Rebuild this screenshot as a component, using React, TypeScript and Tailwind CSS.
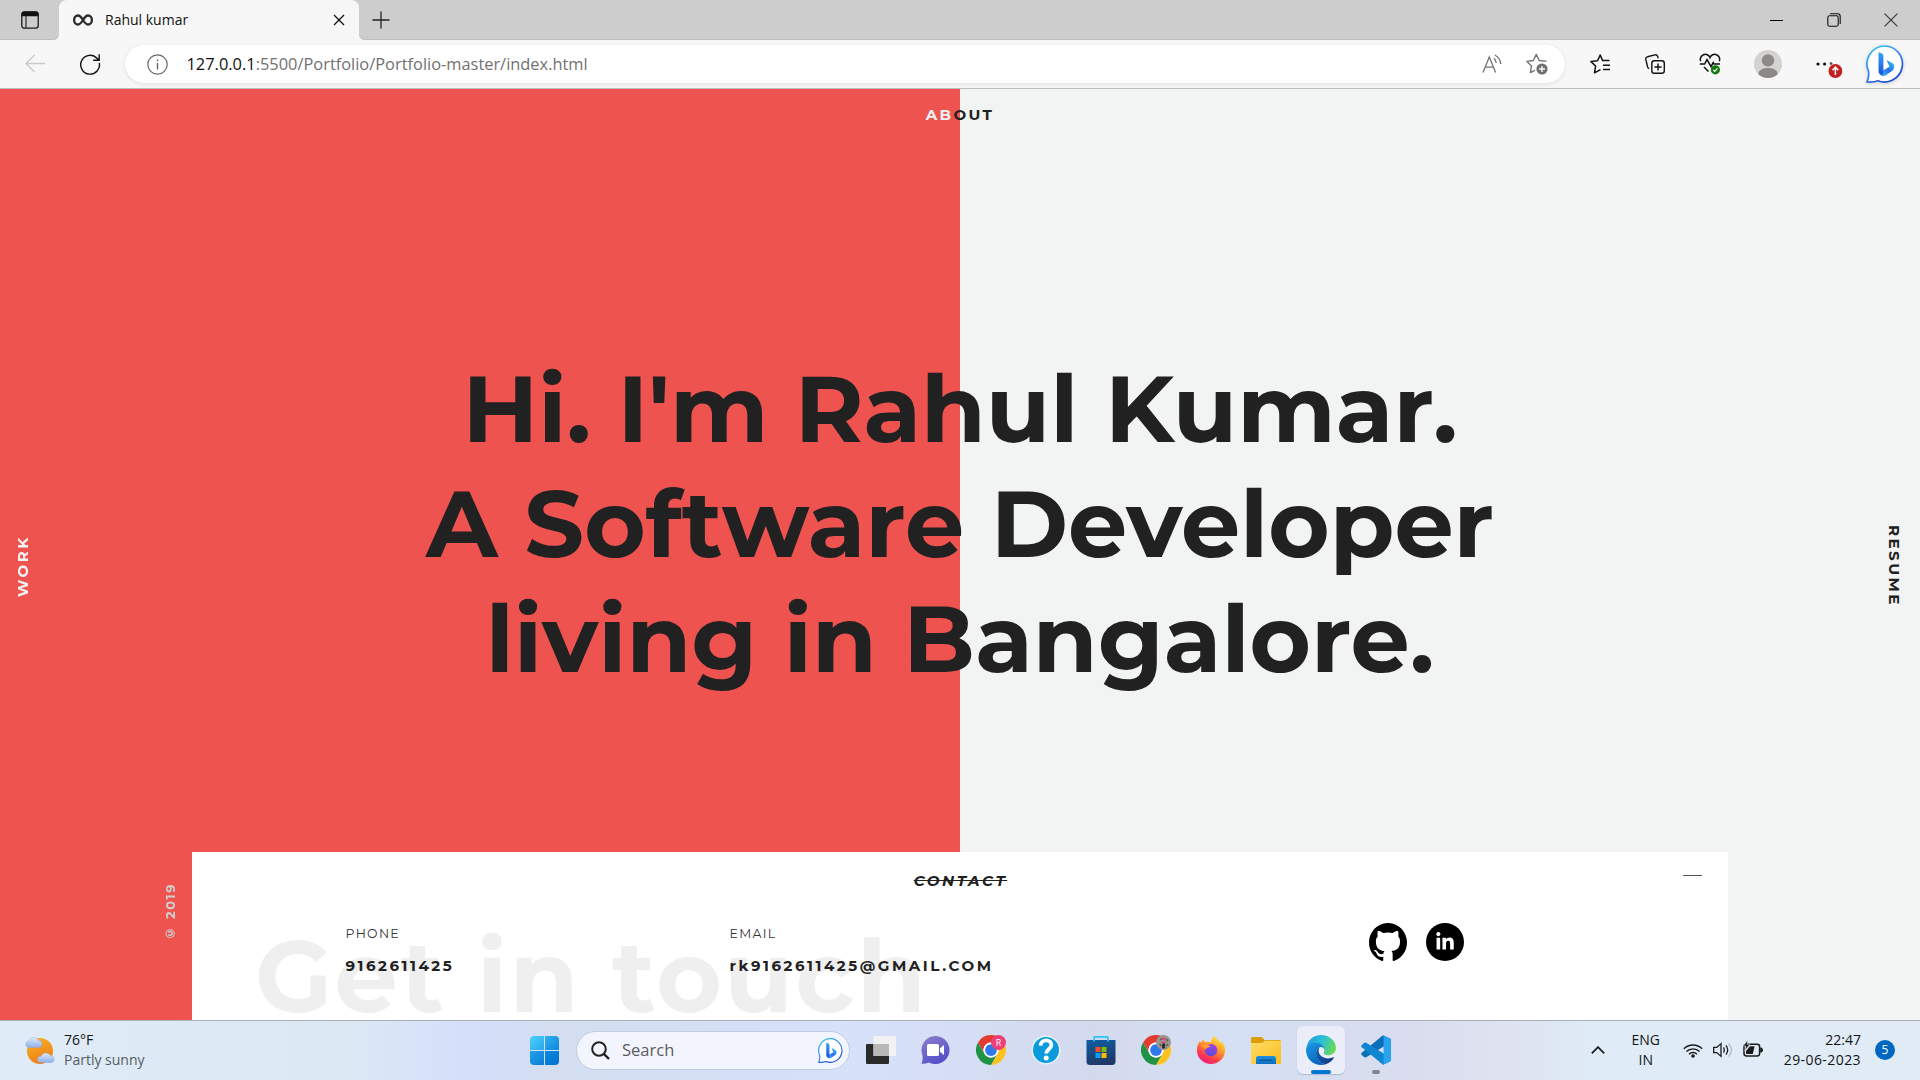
import React from 'react';
import { FaLinkedinIn } from 'react-icons/fa';

type IconProps = { className?: string };

function Slot({ className, children }: { className: string; children: React.ReactNode }) {
  return <div className={`flex shrink-0 items-center justify-center ${className}`}>{children}</div>;
}

function BingBubble({ className }: IconProps) {
  return (
    <svg viewBox="0 0 38 38" className={className} fill="none">
      <defs>
        <linearGradient id="bubble" x1="0" y1="0" x2="0.6" y2="1">
          <stop offset="0" stopColor="#2bd0ee" />
          <stop offset="0.5" stopColor="#3a86ee" />
          <stop offset="1" stopColor="#1b4fd6" />
        </linearGradient>
        <linearGradient id="bstem" x1="0" y1="0" x2="0" y2="1">
          <stop offset="0" stopColor="#37a6f5" />
          <stop offset="1" stopColor="#1c50dc" />
        </linearGradient>
        <linearGradient id="bbowl" x1="0" y1="1" x2="1" y2="0">
          <stop offset="0" stopColor="#3dc9f5" />
          <stop offset="0.5" stopColor="#2b6df0" />
          <stop offset="1" stopColor="#2fd8e4" />
        </linearGradient>
      </defs>
      <path
        d="M19 1A18 18 0 1 1 12 35.8C9 37 5 37.2 1 37C2.6 33.5 3 30 2.6 26.5A18 18 0 0 1 19 1Z"
        fill="#fff"
        stroke="url(#bubble)"
        strokeWidth="1.7"
      />
      <path d="M20.5 15L27 18.6Q29.6 21.6 26.8 25.4L18.6 31Q14.4 31.8 13.4 27.4L23.5 21.8Z" fill="url(#bbowl)" />
      <path d="M12.5 7L16 8.4Q17.4 9.2 17.4 11V26.5Q17.4 30 15.5 30Q12.5 29 12.5 26Z" fill="url(#bstem)" />
    </svg>
  );
}

function Chrome({ className }: IconProps) {
  return (
    <svg viewBox="0 0 48 48" className={className}>
      <circle cx="24" cy="24" r="24" fill="#fff" />
      <path d="M24 12H44.8A24 24 0 0 0 3.2 12L13.6 30A12 12 0 0 1 24 12Z" fill="#e33b2e" />
      <path d="M24 12H44.8A24 24 0 0 1 24 48L34.4 30A12 12 0 0 0 24 12Z" fill="#fcc31e" />
      <path d="M34.4 30L24 48A24 24 0 0 1 3.2 12L13.6 30A12 12 0 0 0 34.4 30Z" fill="#219245" />
      <circle cx="24" cy="24" r="12" fill="#fff" />
      <circle cx="24" cy="24" r="9.4" fill="#2f78ee" />
    </svg>
  );
}

function Edge({ className }: IconProps) {
  return (
    <svg viewBox="0 0 30 30" className={className}>
      <defs>
        <linearGradient id="edgeTop" x1="0" y1="0.3" x2="1" y2="0.6">
          <stop offset="0" stopColor="#1f9fe0" />
          <stop offset="0.5" stopColor="#2cc0d8" />
          <stop offset="1" stopColor="#6bdc4e" />
        </linearGradient>
        <linearGradient id="edgeLeft" x1="0" y1="0" x2="0.6" y2="1">
          <stop offset="0" stopColor="#1b9be2" />
          <stop offset="1" stopColor="#0a62c0" />
        </linearGradient>
        <linearGradient id="edgeBottom" x1="0" y1="0" x2="1" y2="0.6">
          <stop offset="0" stopColor="#0d5fb4" />
          <stop offset="1" stopColor="#123f86" />
        </linearGradient>
      </defs>
      <path d="M0.4 13C1.5 5 7.5 0 15 0C23.5 0 30 6 30 13C30 17.5 26.5 20.2 22.5 20.2C19.5 20.2 17.5 19.2 17.6 18.3C17.7 17.5 18.4 17.2 18.4 15.4C18.4 11.5 14.5 8.3 9.7 8.3C5 8.3 1.8 10.5 0.4 13Z" fill="url(#edgeTop)" />
      <path d="M0 15C0 10.5 4.3 7.8 9.5 7.8C14.5 7.8 18 10.8 18.3 14.5C17.5 12.5 16 11.6 14.2 12C11.5 13 9.8 16 10.3 19.5C11 25 15 28.6 19.6 29.2C17.8 29.8 16.5 30 15 30C6.5 30 0 23.3 0 15Z" fill="url(#edgeLeft)" />
      <path d="M13.8 12.2C11 13 9.8 16 10.1 19.3C10.7 25 15.5 29.2 19.8 29.2C23.8 27.8 26.5 25.3 27.9 22.7C28 22.3 27.7 22.1 27.2 22.3C25.8 23 24 23.5 22.2 23.5C17 23.5 12.6 20 12.6 15.8C12.6 14.3 13.1 13 13.8 12.2Z" fill="url(#edgeBottom)" />
    </svg>
  );
}

function VsCode({ className }: IconProps) {
  return (
    <svg viewBox="0 0 30 30" className={className}>
      <path d="M22 0.2L29 3.4Q30 4 30 5.2V7L5.2 22.2Q4 22.8 3 22L0.6 19.8Q-0.3 18.8 0.8 17.8Z" fill="#0a6fb8" />
      <path d="M22 29.8L29 26.6Q30 26 30 24.8V23L5.2 7.8Q4 7.2 3 8L0.6 10.2Q-0.3 11.2 0.8 12.2Z" fill="#0f86d2" />
      <path d="M22 0.2L29 3.4Q30 4 30 5.2V24.8Q30 26 29 26.6L22 29.8Q22.6 29 22.6 27.5V2.5Q22.6 1 22 0.2Z" fill="#27a3f0" />
    </svg>
  );
}

function Firefox({ className }: IconProps) {
  return (
    <svg viewBox="0 0 28 28" className={className}>
      <defs>
        <linearGradient id="fox" x1="0.8" y1="0" x2="0.25" y2="1">
          <stop offset="0" stopColor="#fff044" />
          <stop offset="0.4" stopColor="#ff9a2a" />
          <stop offset="0.75" stopColor="#ff3a4a" />
          <stop offset="1" stopColor="#e8178a" />
        </linearGradient>
        <linearGradient id="globe" x1="0.6" y1="0" x2="0.4" y2="1">
          <stop offset="0" stopColor="#a23fe8" />
          <stop offset="1" stopColor="#5a4fd8" />
        </linearGradient>
      </defs>
      <path d="M18 0C19 3 22 4 24 7C24.6 6.4 24.8 5.6 24.8 5C27 8 28 11 28 14.4A14 13.6 0 0 1 0 14.4C0 10.5 1 7 3.2 4.8C3.4 6 3.6 6.6 4.2 7C4.6 5.4 5.4 4.2 6.6 3.4C6.6 4.8 7.4 5.6 8.6 6.2C10.5 5.6 12.5 5.8 14 6.4C14 3.5 15.6 1.2 18 0Z" fill="url(#fox)" />
      <circle cx="14" cy="14.2" r="6.2" fill="url(#globe)" />
      <path d="M3.5 9.2C6 8 10 8.2 13.5 10.2C12 12 9 11.5 8.5 13.5C7 12 5 10.5 3.5 9.2Z" fill="#ff9d2c" />
    </svg>
  );
}

function Folder({ className }: IconProps) {
  return (
    <svg viewBox="0 0 30 27" className={className}>
      <defs>
        <linearGradient id="folder" x1="0" y1="0" x2="1" y2="1">
          <stop offset="0" stopColor="#ffdc6a" />
          <stop offset="1" stopColor="#fbbd1c" />
        </linearGradient>
        <linearGradient id="tray" x1="0" y1="0" x2="0" y2="1">
          <stop offset="0" stopColor="#1d8fe0" />
          <stop offset="1" stopColor="#0e6fc4" />
        </linearGradient>
      </defs>
      <path d="M0 1.5Q0 0 1.5 0H10Q11 0 11.8 1L13.5 3H29Q30 3 30 4V12H0Z" fill="#dd9d08" />
      <path d="M0 6H10Q11.5 6 12.5 5L14 3.8H30V25.5Q30 27 28.5 27H1.5Q0 27 0 25.5Z" fill="url(#folder)" />
      <path d="M5 27V21.5Q5 19 7.5 19H22.5Q25 19 25 21.5V27Z" fill="url(#tray)" />
      <path d="M8.5 23.2H21.5" stroke="#0b4f94" strokeWidth="1.2" />
    </svg>
  );
}

function Store({ className }: IconProps) {
  return (
    <svg viewBox="0 0 30 29" className={className}>
      <defs>
        <linearGradient id="bag" x1="0" y1="0" x2="0.3" y2="1">
          <stop offset="0" stopColor="#0f5ea6" />
          <stop offset="1" stopColor="#1f3a68" />
        </linearGradient>
      </defs>
      <path d="M8 6V2Q8 0.8 9.2 0.8H20.8Q22 0.8 22 2V6" fill="none" stroke="#2cc3f2" strokeWidth="1.7" />
      <path d="M0.5 4H29.5V25.5Q29.5 29 26 29H4Q0.5 29 0.5 25.5Z" fill="url(#bag)" />
      <path d="M8 4V5.6M22 4V5.6" stroke="#2cc3f2" strokeWidth="1.7" />
      <path d="M9.5 11H14.5V16H9.5Z" fill="#f25022" />
      <path d="M15.5 11H20.5V16H15.5Z" fill="#7fba00" />
      <path d="M9.5 17H14.5V22H9.5Z" fill="#00a4ef" />
      <path d="M15.5 17H20.5V22H15.5Z" fill="#ffb900" />
    </svg>
  );
}

function Weather({ className }: IconProps) {
  return (
    <svg viewBox="0 0 30 28" className={className}>
      <defs>
        <linearGradient id="sun" x1="0" y1="0" x2="0.4" y2="1">
          <stop offset="0" stopColor="#f6b62c" />
          <stop offset="1" stopColor="#f07f13" />
        </linearGradient>
        <linearGradient id="cloud" x1="0" y1="0" x2="0" y2="1">
          <stop offset="0" stopColor="#dfe9fb" />
          <stop offset="1" stopColor="#8fb0ea" />
        </linearGradient>
      </defs>
      <circle cx="15" cy="15" r="13" fill="url(#sun)" />
      <path d="M3.5 11.5A3.3 3.3 0 0 1 3.5 5A5.6 5.6 0 0 1 13.5 4.2A3.7 3.7 0 0 1 14 11.5Z" fill="url(#cloud)" stroke="#8fabdf" strokeWidth="0.4" />
      <path d="M15.5 26.5A3.1 3.1 0 0 1 16 20.3A5.3 5.3 0 0 1 25.5 19.6A3.5 3.5 0 0 1 26.5 26.5Z" fill="url(#cloud)" stroke="#8fabdf" strokeWidth="0.4" />
    </svg>
  );
}

function TabStrip() {
  return (
    <div className="flex h-10 bg-[#f7f7f7]">
      <Slot className="w-[59px] rounded-br-md bg-[#cdcdcd] pl-px shadow-[inset_0_-1px_0_#bdbdbd]">
        <svg viewBox="0 0 18 18" className="size-[18px]" fill="none">
          <rect x="0.8" y="0.8" width="16.4" height="16.4" rx="2.6" stroke="#1a1a1a" strokeWidth="1.3" />
          <path d="M0.6 5.2V3Q0.6 0.6 3 0.6H15Q17.4 0.6 17.4 3V5.2Z" fill="#111" />
          <path d="M5 5V17" stroke="#1a1a1a" strokeWidth="1.1" />
        </svg>
      </Slot>
      <div className="w-[300px] bg-[linear-gradient(#cdcdcd_50%,#f7f7f7_50%)]">
        <div className="flex h-10 items-center rounded-t-lg bg-[#f7f7f7] pl-3.5 pr-3.5">
          <svg viewBox="0 0 20 12" className="h-3 w-5" fill="none" stroke="#2a2a2a" strokeWidth="2.3">
            <path d="M10 6C8.4 3.4 7.2 1.5 5 1.5A3.9 4.5 0 0 0 5 10.5C7.2 10.5 8.4 8.6 10 6C11.6 3.4 12.8 1.5 15 1.5A3.9 4.5 0 0 1 15 10.5C12.8 10.5 11.6 8.6 10 6Z" />
          </svg>
          <span className="ml-3 flex-1 text-sm leading-5 text-[#111]">Rahul kumar</span>
          <svg viewBox="0 0 12 12" className="size-3" fill="none" stroke="#111" strokeWidth="1.3">
            <path d="M1 1L11 11M11 1L1 11" />
          </svg>
        </div>
      </div>
      <div className="flex flex-1 items-center rounded-bl-md bg-[#cdcdcd] shadow-[inset_0_-1px_0_#bdbdbd]">
        <svg viewBox="0 0 18 18" className="ml-[13px] size-[18px]" fill="none" stroke="#222" strokeWidth="1.3">
          <path d="M9 0.5V17.5M0.5 9H17.5" />
        </svg>
        <div className="flex-1" />
        <Slot className="w-[58px]">
          <div className="h-px w-[13px] bg-black" />
        </Slot>
        <Slot className="w-[57px]">
          <svg viewBox="0 0 14 14" className="size-3.5" fill="none" stroke="#111" strokeWidth="1.1">
            <rect x="0.8" y="2.8" width="10.4" height="10.4" rx="1.6" />
            <path d="M3 0.8H10.6Q13.2 0.8 13.2 3.4V11" />
          </svg>
        </Slot>
        <Slot className="w-[58px]">
          <svg viewBox="0 0 14 14" className="size-3.5" fill="none" stroke="#333" strokeWidth="1.1">
            <path d="M0.6 0.6L13.4 13.4M13.4 0.6L0.6 13.4" />
          </svg>
        </Slot>
      </div>
    </div>
  );
}

function Toolbar() {
  return (
    <div className="flex h-[49px] items-center border-b border-[#bcbcbc] bg-[#f7f7f7]">
      <Slot className="w-[69px]">
        <svg viewBox="0 0 20 20" className="size-5" fill="none" stroke="#c9c9c9" strokeWidth="1.3">
          <path d="M20 9.5H1M9.5 1L1 9.5L9.5 18" />
        </svg>
      </Slot>
      <Slot className="w-[42px]">
        <svg viewBox="0 0 22 22" className="size-[22px]" fill="none" stroke="#111" strokeWidth="1.4">
          <path d="M20.3 9.8A9.4 9.4 0 1 1 17.2 4.6L20 7M20.2 1.2V7.2H14.2" />
        </svg>
      </Slot>
      <div className="ml-[14px] flex h-[38px] w-[1440px] items-center rounded-full bg-white pl-[22px] shadow-[0_1px_4px_rgba(0,0,0,0.1)]">
        <svg viewBox="0 0 21 21" className="size-[21px]" fill="none" stroke="#666" strokeWidth="1.2">
          <circle cx="10.5" cy="10.5" r="9.7" />
          <path d="M10.5 9V15.5M10.5 5.6V7.2" strokeWidth="1.4" />
        </svg>
        <span className="ml-[18.5px] flex-1 text-[16.4px] leading-6 text-[#717171]">
          <span className="text-[#111]">127.0.0.1</span>:5500/Portfolio/Portfolio-master/index.html
        </span>
        <Slot className="w-[45px]">
          <svg viewBox="0 0 20 20" className="size-5" fill="none" stroke="#757575" strokeWidth="1.3">
            <path d="M1 18.5L7.3 3L13.6 18.5M3.2 13.2H11.4M12 4.2Q14 6 14.2 9M12.8 1Q18.2 3.8 18.8 10" />
          </svg>
        </Slot>
        <Slot className="mr-[6px] w-[45px]">
          <svg viewBox="0 0 22 22" className="size-[22px]" fill="none" stroke="#757575" strokeWidth="1.4" strokeLinejoin="round">
            <path d="M20.5 8.4L13.2 7.5L10.3 1.4L7.3 7.5L0.9 8.4L5.5 12.9L4.4 19.6L9 17.4" />
            <circle cx="16" cy="16" r="5.6" fill="#707070" stroke="none" />
            <path d="M16 13V19M13 16H19" stroke="#fff" />
          </svg>
        </Slot>
      </div>
      <Slot className="ml-[7px] w-[55px]">
        <svg viewBox="0 0 20 20" className="size-5" fill="none" stroke="#111" strokeWidth="1.5" strokeLinejoin="round">
          <path d="M19.5 6.6H12.6L10.2 1L7.5 6.8L1 7.6L5.6 12L4.5 18.8L10.5 15.6M13 11.2H20M13 15.6H20" />
        </svg>
      </Slot>
      <Slot className="w-[55px]">
        <svg viewBox="0 0 20 20" className="size-5" fill="none" stroke="#111" strokeWidth="1.4">
          <rect x="6.8" y="6.8" width="12.5" height="12.5" rx="2.6" />
          <path d="M13 9.6V16.6M9.5 13H16.6M4.2 14.6Q3 14.2 2.6 13L0.8 5.4Q0.4 3.4 2.4 2.8L10 0.9Q12 0.5 12.6 2.4L13.2 4.4" />
        </svg>
      </Slot>
      <Slot className="w-[55px]">
        <svg viewBox="0 0 22 22" className="size-[22px]" fill="none" stroke="#111" strokeWidth="1.5">
          <path d="M1.6 8.2A5 5 0 0 1 11 4.6A5 5 0 0 1 20.4 8.2M5 14L9.5 18.5M0.8 11H5.6L8 6.6L12 13.6L14.2 9.6L15 11H21" />
          <circle cx="16.4" cy="16.8" r="4.6" fill="#107c10" stroke="none" />
          <path d="M14.4 17L15.8 18.4L18.4 15.4" stroke="#fff" strokeWidth="1.2" />
        </svg>
      </Slot>
      <Slot className="w-[61px]">
        <svg viewBox="0 0 28 28" className="size-7">
          <circle cx="14" cy="14" r="14" fill="#d5d2cf" />
          <circle cx="14" cy="10.4" r="6.2" fill="#8d8986" />
          <path d="M4.2 24C5 19.8 9 18 14 18S23 19.8 23.8 24A14 14 0 0 1 4.2 24Z" fill="#8d8986" />
        </svg>
      </Slot>
      <Slot className="w-[58px]">
        <svg viewBox="0 0 28 28" className="ml-1 size-7">
          <circle cx="3" cy="14" r="1.6" fill="#111" />
          <circle cx="9.6" cy="14" r="1.6" fill="#111" />
          <circle cx="16" cy="13.6" r="1.4" fill="#555" />
          <circle cx="20.4" cy="21" r="6.9" fill="#c4201f" />
          <path d="M20.4 25V17.5M17.5 20.2L20.4 17.2L23.3 20.2" fill="none" stroke="#fff" strokeWidth="1.5" />
        </svg>
      </Slot>
      <Slot className="w-[57px]">
        <BingBubble className="size-[38px] drop-shadow-sm" />
      </Slot>
    </div>
  );
}

function ContactPanel() {
  return (
    <div className="flex h-[168px]">
      <div className="flex w-48 justify-end pr-3.5 pt-[30px]">
        <span className="h-[60px] rotate-180 whitespace-nowrap text-[13px] font-bold leading-[15px] tracking-[1.6px] text-[#cfcfcf] [writing-mode:vertical-rl]">
          © 2019
        </span>
      </div>
      <section className="relative w-[1536px] overflow-hidden bg-white">
        <div aria-hidden="true" className="absolute left-[63px] top-[63px] whitespace-nowrap text-[100px] font-bold leading-[122px] tracking-[2.5px] text-[#efefef]">
          Get in touch
        </div>
        <div className="absolute right-[26px] top-[23px] h-px w-[19px] bg-[#555]" />
        <h2 className="relative pl-px pt-[19px] text-center text-[15px] font-bold italic leading-[19px] tracking-[2.57px] line-through">
          CONTACT
        </h2>
        <div className="relative flex items-start pl-[153.5px] pt-[33px]">
          <div className="w-[384px]">
            <p className="pt-[3px] text-[12.5px] leading-[15px] tracking-[1.3px] text-[#333]">PHONE</p>
            <p className="mt-[15px] text-[15px] font-bold leading-[19px] tracking-[2.55px]">9162611425</p>
          </div>
          <div className="w-[639.5px]">
            <p className="pt-[3px] text-[12.5px] leading-[15px] tracking-[1.3px] text-[#333]">EMAIL</p>
            <p className="mt-[15px] text-[15px] font-bold leading-[19px] tracking-[2.55px]">rk9162611425@GMAIL.COM</p>
          </div>
          <div className="flex gap-[19px]">
            <svg viewBox="0 0.3 24 23.4" className="size-[38px]" preserveAspectRatio="none">
              <path d="M12 .297c-6.63 0-12 5.373-12 12 0 5.303 3.438 9.8 8.205 11.385.6.113.82-.258.82-.577 0-.285-.01-1.04-.015-2.04-3.338.724-4.042-1.61-4.042-1.61C4.422 18.07 3.633 17.7 3.633 17.7c-1.087-.744.084-.729.084-.729 1.205.084 1.838 1.236 1.838 1.236 1.07 1.835 2.809 1.305 3.495.998.108-.776.417-1.305.76-1.605-2.665-.3-5.466-1.332-5.466-5.93 0-1.31.465-2.38 1.235-3.22-.135-.303-.54-1.523.105-3.176 0 0 1.005-.322 3.3 1.23.96-.267 1.98-.399 3-.405 1.02.006 2.04.138 3 .405 2.28-1.552 3.285-1.23 3.285-1.23.645 1.653.24 2.873.12 3.176.765.84 1.23 1.91 1.23 3.22 0 4.61-2.805 5.625-5.475 5.92.42.36.81 1.096.81 2.22 0 1.606-.015 2.896-.015 3.286 0 .315.21.69.825.57C20.565 22.092 24 17.592 24 12.297c0-6.627-5.373-12-12-12" />
            </svg>
            <div className="flex size-[38px] items-center justify-center rounded-full bg-black">
              <FaLinkedinIn className="size-5 text-white" />
            </div>
          </div>
        </div>
      </section>
      <div className="flex-1" />
    </div>
  );
}

function Portfolio() {
  return (
    <main className="flex h-[931px] flex-col bg-[linear-gradient(90deg,#ef5350_50%,#f1f4f3_50%)] font-['Montserrat','Inter',sans-serif] text-[#212121]">
      <div className="flex h-[763px] justify-between">
        <nav className="flex w-[60px] pl-[13px] pt-[446px]">
          <span className="h-[62px] rotate-180 whitespace-nowrap text-[15px] font-bold leading-[19px] tracking-[2.5px] text-[#f1f3f3] [writing-mode:vertical-rl]">
            WORK
          </span>
        </nav>
        <div className="flex flex-col items-center pt-4 text-center">
          <p className="text-[15px] font-bold leading-[19px] tracking-[2.4px]">
            <span className="text-[#f1f3f3]">AB</span>OUT
          </p>
          <h1 className="mt-[227px] text-[93.75px] font-bold leading-[115px]">
            Hi. I'm Rahul Kumar.
            <br />A Software Developer
            <br />
            living in Bangalore.
          </h1>
        </div>
        <nav className="flex w-[60px] justify-end pr-4 pt-[436px]">
          <span className="h-[83px] whitespace-nowrap text-[15px] font-bold leading-[19px] tracking-[2.5px] [writing-mode:vertical-rl]">
            RESUME
          </span>
        </nav>
      </div>
      <ContactPanel />
    </main>
  );
}

function Taskbar() {
  return (
    <footer className="flex h-[60px] items-center border-t border-[#a9b0bb] bg-[linear-gradient(90deg,#dfebf6_0%,#dce9f5_18%,#d3defa_25%,#d4def0_29%,#d6e1fa_44%,#d4daee_57%,#d5e0f4_64%,#d8dcee_73%,#dfe2f0_78%,#dfebf7_83%,#e0ebf5_100%)] pb-px text-[#151515]">
      <div className="flex w-[517px] items-center pl-[25px]">
        <Weather className="h-7 w-[30px]" />
        <div className="ml-[9px] text-sm leading-5">
          <p>76°F</p>
          <p className="text-[#555b62]">Partly sunny</p>
        </div>
      </div>
      <Slot className="w-[55px]">
        <div className="grid size-[29px] grid-cols-2 gap-px overflow-hidden rounded-sm">
          <div className="bg-gradient-to-br from-[#4cd0fb] to-[#28a8ea]" />
          <div className="bg-gradient-to-br from-[#2fb0ee] to-[#0d86dc]" />
          <div className="bg-gradient-to-br from-[#27a3e8] to-[#0a7cd6]" />
          <div className="bg-gradient-to-br from-[#0e8ade] to-[#0070cf]" />
        </div>
      </Slot>
      <div className="ml-1 flex h-[39px] w-[274px] items-center rounded-full border border-[#c3cbe0] bg-[#f2f5fd] pl-[14px] pr-1.5">
        <svg viewBox="0 0 19 19" className="size-[19px]" fill="none" stroke="#222" strokeWidth="2">
          <circle cx="8" cy="8" r="6.8" />
          <path d="M12.8 12.8L18 18" strokeWidth="2.4" />
        </svg>
        <span className="ml-3 flex-1 text-[16.5px] leading-6 text-[#5b5b60]">Search</span>
        <BingBubble className="size-[25px]" />
      </div>
      <Slot className="ml-[3px] w-[55px]">
        <svg viewBox="0 0 30 28" className="h-7 w-[30px]">
          <rect x="0" y="8" width="23" height="20" rx="1" fill="#2a2a2a" />
          <rect x="7.5" y="0" width="22.5" height="20" rx="1" fill="#f2f2f2" />
          <rect x="7.5" y="8" width="15.5" height="12" fill="#b9b9b9" />
        </svg>
      </Slot>
      <Slot className="w-[55px]">
        <svg viewBox="0 0 29 28" className="h-7 w-[29px]">
          <defs>
            <linearGradient id="chat" x1="0" y1="0" x2="0.5" y2="1">
              <stop offset="0" stopColor="#8f7fce" />
              <stop offset="1" stopColor="#5450c8" />
            </linearGradient>
          </defs>
          <path d="M14.7 0A14 14 0 1 1 8 26.4Q4 28 0.4 27.8Q2 25 1.6 19.5A14 14 0 0 1 14.7 0Z" fill="url(#chat)" />
          <rect x="6" y="8" width="12" height="12" rx="1.6" fill="#fff" />
          <path d="M19 12.2L23 9V19L19 15.8Z" fill="#fff" />
        </svg>
      </Slot>
      <Slot className="relative w-[56px]">
        <Chrome className="size-[30px]" />
        <span className="absolute right-[13px] top-0 flex size-[15px] items-center justify-center rounded-full bg-[#ee3f78] text-[9px] leading-none text-white">
          R
        </span>
      </Slot>
      <Slot className="w-[54px]">
        <svg viewBox="0 0 30 30" className="size-[30px]" fill="none">
          <circle cx="15" cy="15" r="13.8" fill="#0a9bdc" stroke="#e6f2fa" strokeWidth="1.6" />
          <path d="M9.6 10.6C9.8 3.6 20.6 3.8 20.4 10.2C20.2 14 15.2 14.2 15.2 18.6" stroke="#fff" strokeWidth="3.8" />
          <circle cx="15.2" cy="23" r="2.5" fill="#fff" />
        </svg>
      </Slot>
      <Slot className="w-[55px]">
        <Store className="h-[29px] w-[30px]" />
      </Slot>
      <Slot className="relative w-[56px]">
        <Chrome className="size-[30px]" />
        <svg viewBox="0 0 15 15" className="absolute right-[13px] top-0 size-[15px]">
          <circle cx="7.5" cy="7.5" r="7.5" fill="#9a9590" />
          <path d="M4 5L6 3.5M10 4L12 6M3.5 9L5.5 11M10 11L12 9" stroke="#5c5c52" strokeWidth="1.4" />
          <path d="M6 2.5H9V5H6ZM5.5 6.5H9.8V8H5.5Z" fill="#e0457c" />
          <path d="M6.2 8.5H9V13.5H6.2Z" fill="#2c2630" />
        </svg>
      </Slot>
      <Slot className="w-[54px]">
        <Firefox className="size-7" />
      </Slot>
      <Slot className="w-[56px]">
        <Folder className="h-[27px] w-[30px]" />
      </Slot>
      <div className="ml-[3px] flex h-12 w-12 flex-col items-center rounded-md bg-[#ebeef8] pt-[9px] shadow-[0_1px_1px_rgba(90,100,140,0.3)]">
        <Edge className="size-[30px]" />
        <div className="mt-[5px] h-1 w-5 rounded-full bg-[#0078d4]" />
      </div>
      <div className="ml-[7px] flex h-12 w-12 flex-col items-center pt-[9px]">
        <VsCode className="size-[30px]" />
        <div className="mt-[5px] h-1 w-2 rounded-full bg-[#82858c]" />
      </div>
      <div className="flex flex-1 items-center justify-end pr-[25px] text-sm leading-5">
        <svg viewBox="0 0 14 8" className="h-2 w-3.5" fill="none" stroke="#1a1a1a" strokeWidth="1.7">
          <path d="M0.8 7.3L7 1.1L13.2 7.3" />
        </svg>
        <p className="ml-[26px] w-[30px] text-center">
          ENG
          <br />
          IN
        </p>
        <svg viewBox="0 0 20 15" className="ml-[22px] h-[15px] w-5" fill="none" stroke="#1a1a1a" strokeWidth="1.4">
          <path d="M0.8 5.8A13 13 0 0 1 19.2 5.8M3.4 8.6A9.3 9.3 0 0 1 16.6 8.6M6 11.2A5.7 5.7 0 0 1 14 11.2" />
          <circle cx="10" cy="13" r="1.8" fill="#1a1a1a" stroke="none" />
        </svg>
        <svg viewBox="0 0 20 16" className="ml-2.5 h-4 w-5" fill="none" stroke="#1a1a1a" strokeWidth="1.3">
          <path d="M0.7 5.4H3.8L8 1.6V14.4L3.8 10.6H0.7ZM10.6 5.4Q12.2 8 10.6 10.6M13 3.4Q16.4 8 13 12.6" />
          <path d="M15.6 1.4Q21.4 8 15.6 14.6" stroke="#b3bbc4" />
        </svg>
        <svg viewBox="0 0 20 17" className="mb-[3px] ml-2.5 h-[17px] w-5">
          <rect x="1" y="4.2" width="15.6" height="11.8" rx="2.4" fill="none" stroke="#1a1a1a" strokeWidth="1.5" />
          <path d="M17.2 7.6H18.6Q20 8.6 20 10.1T18.6 12.6H17.2Z" fill="#1a1a1a" />
          <path d="M3 14V11L7 6.2H11.6L9.8 14Z" fill="#1a1a1a" />
          <path d="M4.6 0L0.4 6.2H3L1.8 10.6L6.8 4.4H4.2Z" fill="#1a1a1a" stroke="#dfebf7" strokeWidth="0.5" />
        </svg>
        <p className="ml-[21px] text-right">
          22:47
          <br />
          <span className="tracking-[0.42px]">29-06-2023</span>
        </p>
        <span className="ml-3.5 flex size-5 items-center justify-center rounded-full bg-[#0067c0] text-xs leading-none text-white">
          5
        </span>
      </div>
    </footer>
  );
}

export default function App() {
  return (
    <div className="h-[1080px] w-[1920px] overflow-hidden font-['Open_Sans','Noto_Sans',sans-serif]">
      <TabStrip />
      <Toolbar />
      <Portfolio />
      <Taskbar />
    </div>
  );
}
